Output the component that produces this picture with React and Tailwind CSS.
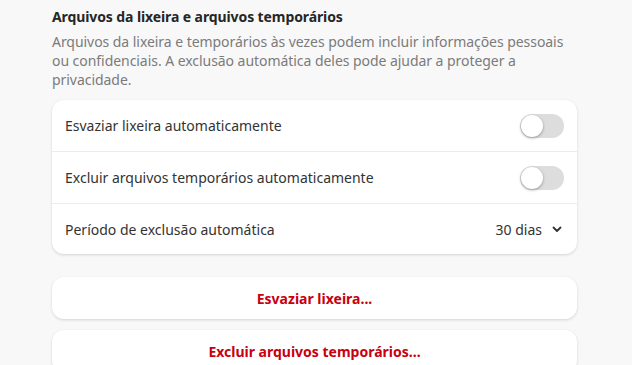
import React from "react";

function Toggle() {
  return (
    <div className="relative w-[44px] h-[24px] rounded-full bg-[#dddddd]">
      <div className="absolute left-[1px] top-[1px] w-[22px] h-[22px] rounded-full bg-white shadow-[0_1px_3px_rgba(0,0,0,0.35)]" />
    </div>
  );
}

export default function App() {
  return (
    <div className="w-[632px] h-[365px] overflow-hidden bg-[#f8f8f8] font-['Noto_Sans',sans-serif]">
      <div className="ml-[52px] w-[525px] pt-[7px]">
        <h2 className="text-[14px] leading-[20px] font-bold text-[#262626] tracking-[-0.1px]">
          Arquivos da lixeira e arquivos temporários
        </h2>
        <p className="mt-[5px] w-[512px] text-[14px] leading-[19px] text-[#7b7b7b] tracking-[-0.05px]">
          Arquivos da lixeira e temporários às vezes podem incluir informações pessoais ou confidenciais. A exclusão automática deles pode ajudar a proteger a privacidade.
        </p>
        <div className="mt-[11px] bg-white rounded-[12px] shadow-[0_1px_3px_rgba(0,0,0,0.15)] text-[14px] text-[#333333]">
          <div className="h-[52px] flex items-center justify-between pl-[13px] pr-[13px] border-b border-[#ececec]">
            <span>Esvaziar lixeira automaticamente</span>
            <Toggle />
          </div>
          <div className="h-[52px] flex items-center justify-between pl-[13px] pr-[13px] border-b border-[#ececec]">
            <span>Excluir arquivos temporários automaticamente</span>
            <Toggle />
          </div>
          <div className="h-[50px] flex items-center justify-between pl-[13px] pr-[14px]">
            <span>Período de exclusão automática</span>
            <div className="flex items-center gap-[9px]">
              <span>30 dias</span>
              <svg width="12" height="12" viewBox="0 0 12 12" fill="none">
                <path d="M2.5 4.5 L6 8 L9.5 4.5" stroke="#333" strokeWidth="1.8" strokeLinecap="round" strokeLinejoin="round" />
              </svg>
            </div>
          </div>
        </div>
        <div className="mt-[23px] flex flex-col gap-[11px]">
          <button className="h-[42px] w-full bg-white rounded-[12px] shadow-[0_1px_3px_rgba(0,0,0,0.15)] text-[14px] font-bold text-[#c8000f]">
            Esvaziar lixeira...
          </button>
          <button className="h-[42px] w-full bg-white rounded-[12px] shadow-[0_1px_3px_rgba(0,0,0,0.15)] text-[14px] font-bold text-[#c8000f]">
            Excluir arquivos temporários...
          </button>
        </div>
      </div>
    </div>
  );
}
